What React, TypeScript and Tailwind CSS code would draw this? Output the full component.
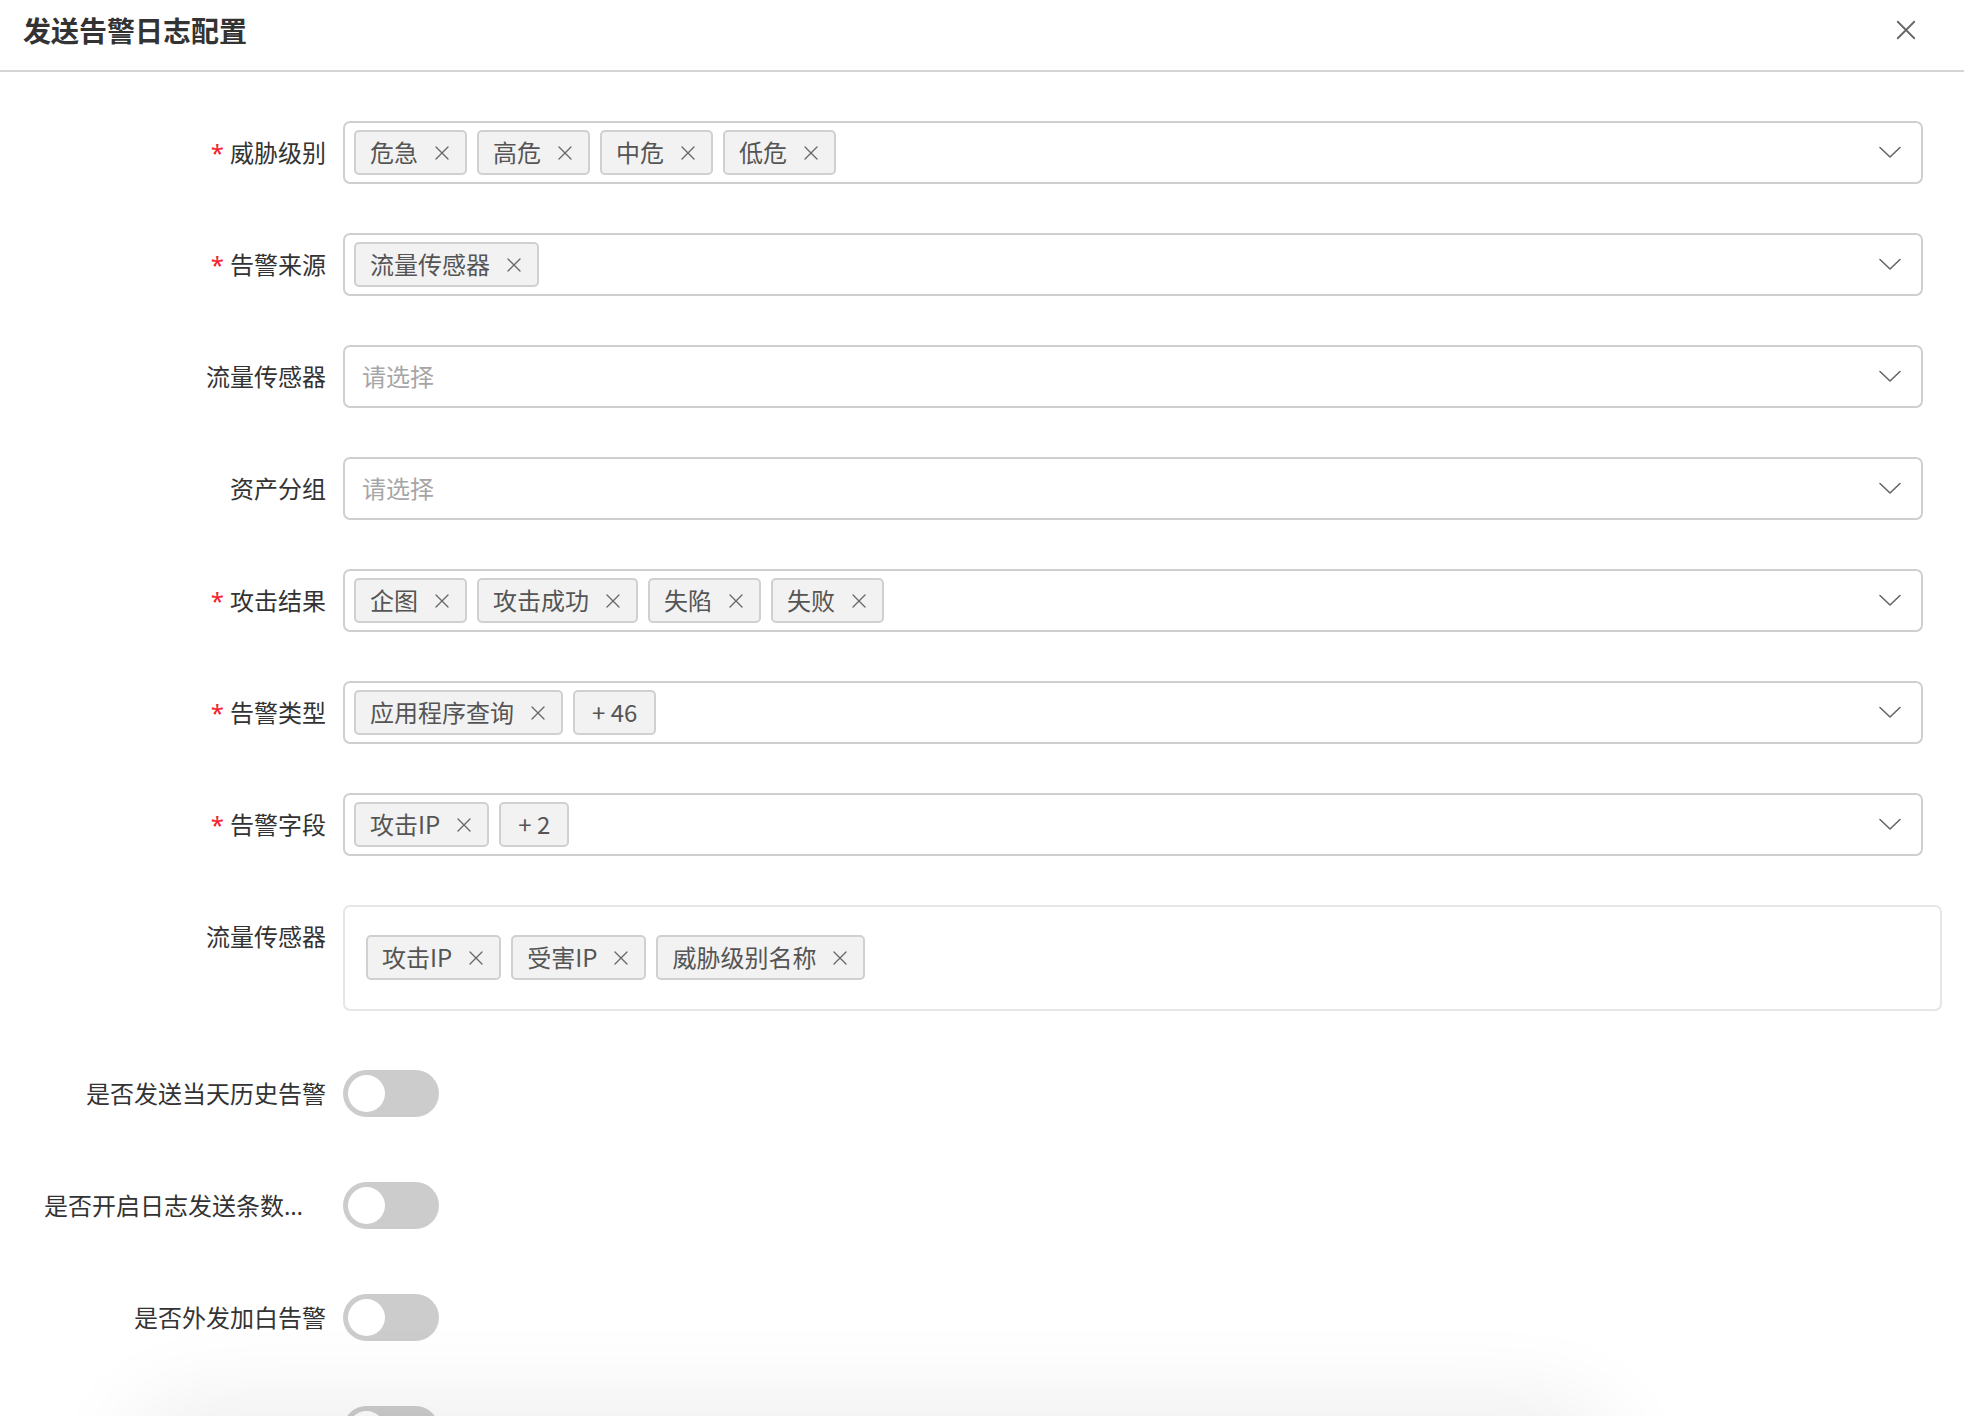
import React from 'react';

type Field = {
  label: string;
  required?: boolean;
  tags?: string[];
  more?: number;
  placeholder?: string;
};

const FIELDS: Field[] = [
  { label: '威胁级别', required: true, tags: ['危急', '高危', '中危', '低危'] },
  { label: '告警来源', required: true, tags: ['流量传感器'] },
  { label: '流量传感器', placeholder: '请选择' },
  { label: '资产分组', placeholder: '请选择' },
  { label: '攻击结果', required: true, tags: ['企图', '攻击成功', '失陷', '失败'] },
  { label: '告警类型', required: true, tags: ['应用程序查询'], more: 46 },
  { label: '告警字段', required: true, tags: ['攻击IP'], more: 2 },
];

// last label is below the fold
const SWITCHES = ['是否发送当天历史告警', '是否开启日志发送条数限制', '是否外发加白告警', ''];

const CloseIcon = ({ size = 16, className = '' }: { size?: number; className?: string }) => (
  <svg width={size} height={size} viewBox="0 0 16 16" className={className} fill="none">
    <path d="M2 2L14 14M14 2L2 14" stroke="currentColor" strokeWidth="1.3" strokeLinecap="round" />
  </svg>
);

const Chevron = () => (
  <svg width="22" height="13" viewBox="0 0 22 13" fill="none" className="text-[#666]">
    <path d="M1 1.5L11 11L21 1.5" stroke="currentColor" strokeWidth="1.6" strokeLinecap="round" strokeLinejoin="round" />
  </svg>
);

const Tag = ({ text, closable = true }: { text: string; closable?: boolean }) => (
  <span
    className={`h-[45px] flex items-center shrink-0 rounded-[5px] border-2 border-[#d0d0d0] bg-[#f2f2f2] text-[24px] text-[#555] leading-none ${
      closable ? 'pl-[14px] pr-[15px] gap-[16px]' : 'px-[17px]'
    }`}
  >
    <span className="pb-[2px]">{text}</span>
    {closable && <CloseIcon size={16} className="text-[#666]" />}
  </span>
);

const Label = ({ text, required }: { text: string; required?: boolean }) => (
  <div className="ml-[44px] mr-[17px] w-[282px] h-[63px] shrink-0 flex items-center justify-end text-[24px] text-[#333] font-['Noto_Sans','Noto_Sans_CJK_SC',sans-serif]">
    <div className="truncate text-right leading-[60px]">
      {required && <span className="text-[#f5222d] mr-[6px]">*</span>}
      {text}
    </div>
  </div>
);

const Switch = () => (
  <div className="w-[96px] h-[47px] rounded-full bg-[#cccccc] p-[5px] flex items-center">
    <div className="w-[37px] h-[37px] rounded-full bg-white" />
  </div>
);

export default function App() {
  return (
    <div className="relative w-[1964px] h-[1416px] overflow-hidden bg-white font-['Noto_Sans_CJK_SC','Noto_Sans',sans-serif]">
      {/* Header */}
      <div className="h-[72px] border-b-2 border-[#d4d4d4] flex items-start justify-between pl-[23px] pr-[47px] pt-[10px]">
        <h2 className="text-[28px] font-bold text-[#333] leading-[40px]">发送告警日志配置</h2>
        <CloseIcon size={22} className="text-[#666] mt-[9px]" />
      </div>

      {/* Form */}
      <div className="pt-[49px]">
        {FIELDS.map((f, i) => (
          <div key={i} className="flex items-start mb-[49px]">
            <Label text={f.label} required={f.required} />
            <div className="w-[1580px] h-[63px] rounded-[7px] border-2 border-[#cfcfcf] pl-[9px] pr-[20px] flex items-center justify-between">
              <div className="flex items-center gap-[10px]">
                {f.tags?.map((t) => <Tag key={t} text={t} />)}
                {f.more !== undefined && <Tag text={`+ ${f.more}`} closable={false} />}
                {f.placeholder && <span className="ml-[8px] pb-[2px] text-[24px] text-[#a6a6a6]">{f.placeholder}</span>}
              </div>
              <Chevron />
            </div>
          </div>
        ))}

        <div className="flex items-start mb-[51px]">
          <Label text="流量传感器" />
          <div className="w-[1599px] h-[106px] rounded-[7px] border-2 border-[#e6e6e6] pl-[21px] pt-[28px] flex items-start gap-[10px]">
            <Tag text="攻击IP" />
            <Tag text="受害IP" />
            <Tag text="威胁级别名称" />
          </div>
        </div>

        {SWITCHES.map((s, i) => (
          <div key={i} className="flex items-center mb-[49px]">
            <Label text={s} />
            <Switch />
          </div>
        ))}
      </div>

      {/* shadow of the popup below the fold */}
      <div className="absolute left-[160px] top-[1440px] w-[1420px] h-[80px] rounded-[40px] bg-white shadow-[0_0_90px_40px_rgba(0,0,0,0.07)]" />
    </div>
  );
}
